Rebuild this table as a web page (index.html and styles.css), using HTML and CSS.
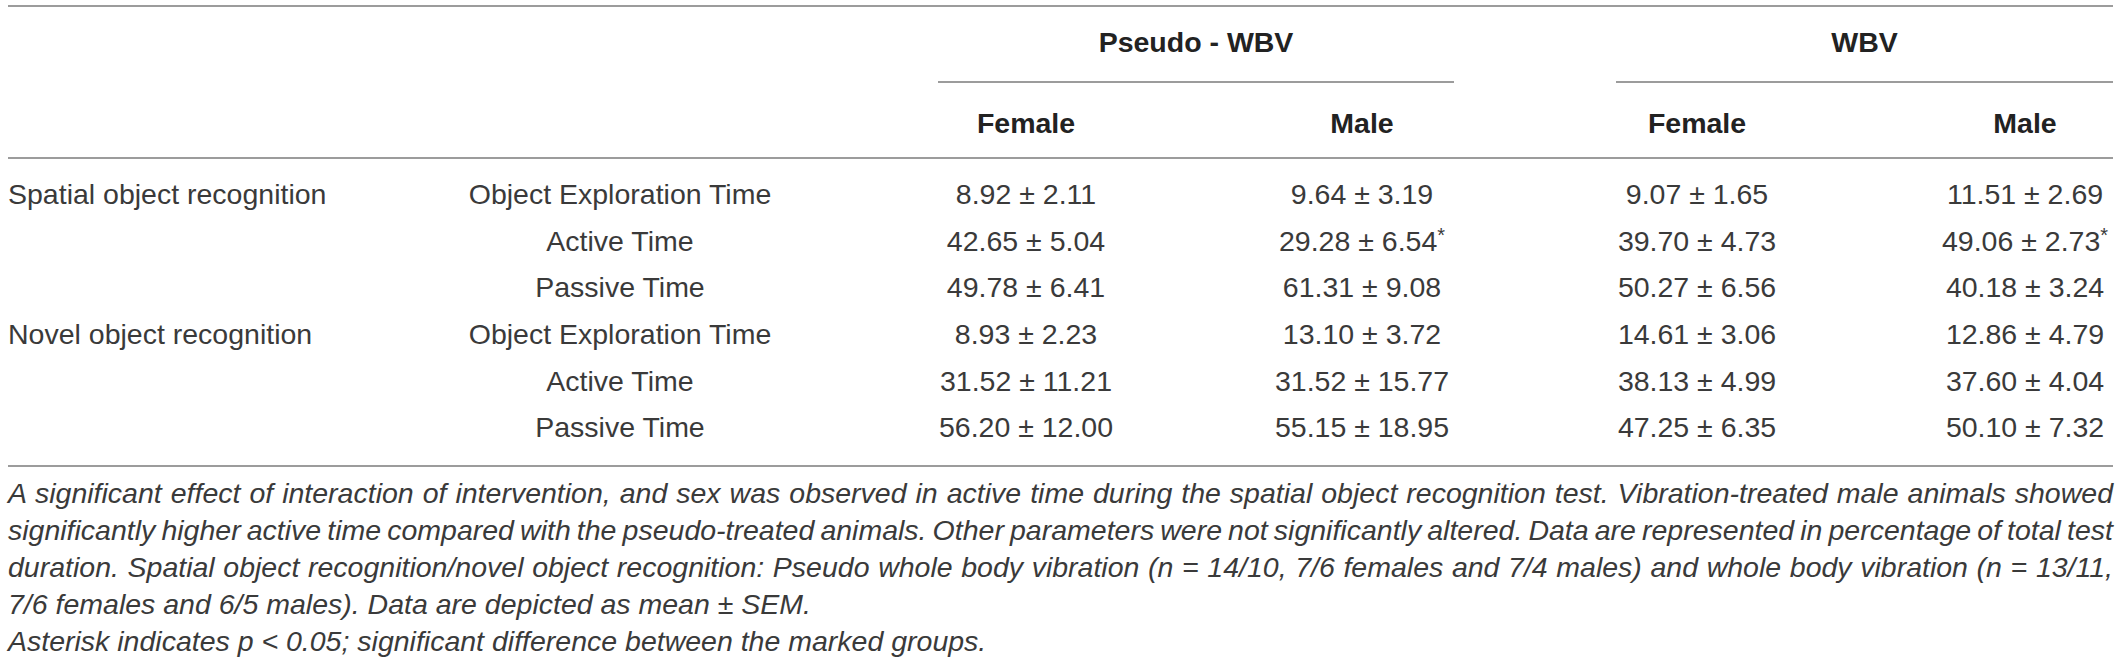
FILE: index.html
```html
<!DOCTYPE html>
<html lang="en">
<head>
<meta charset="UTF-8">
<meta name="viewport" content="width=device-width, initial-scale=1.0">
<title>Object recognition – exploration time</title>
<link rel="stylesheet" href="styles.css">
</head>
<body>

<div class="page">
  <table class="data">
    <colgroup>
      <col class="c-test">
      <col class="c-param">
      <col class="c-pf">
      <col class="c-pm">
      <col class="c-wf">
      <col class="c-wm">
    </colgroup>
    <thead>
      <tr class="head-groups">
        <th></th>
        <th></th>
        <th colspan="2" class="group pseudo"><div class="group-label">Pseudo - WBV</div></th>
        <th colspan="2" class="group wbv"><div class="group-label">WBV</div></th>
      </tr>
      <tr class="head-sex">
        <th></th>
        <th></th>
        <th>Female</th>
        <th>Male</th>
        <th>Female</th>
        <th>Male</th>
      </tr>
    </thead>
    <tbody>
      <tr>
        <td class="test">Spatial object recognition</td>
        <td>Object Exploration Time</td>
        <td>8.92 ± 2.11</td>
        <td>9.64 ± 3.19</td>
        <td>9.07 ± 1.65</td>
        <td>11.51 ± 2.69</td>
      </tr>
      <tr>
        <td class="test"></td>
        <td>Active Time</td>
        <td>42.65 ± 5.04</td>
        <td>29.28 ± 6.54<span class="sig">*</span></td>
        <td>39.70 ± 4.73</td>
        <td>49.06 ± 2.73<span class="sig">*</span></td>
      </tr>
      <tr>
        <td class="test"></td>
        <td>Passive Time</td>
        <td>49.78 ± 6.41</td>
        <td>61.31 ± 9.08</td>
        <td>50.27 ± 6.56</td>
        <td>40.18 ± 3.24</td>
      </tr>
      <tr>
        <td class="test">Novel object recognition</td>
        <td>Object Exploration Time</td>
        <td>8.93 ± 2.23</td>
        <td>13.10 ± 3.72</td>
        <td>14.61 ± 3.06</td>
        <td>12.86 ± 4.79</td>
      </tr>
      <tr>
        <td class="test"></td>
        <td>Active Time</td>
        <td>31.52 ± 11.21</td>
        <td>31.52 ± 15.77</td>
        <td>38.13 ± 4.99</td>
        <td>37.60 ± 4.04</td>
      </tr>
      <tr>
        <td class="test"></td>
        <td>Passive Time</td>
        <td>56.20 ± 12.00</td>
        <td>55.15 ± 18.95</td>
        <td>47.25 ± 6.35</td>
        <td>50.10 ± 7.32</td>
      </tr>
    </tbody>
  </table>

  <div class="caption">
    <p>
      <span class="line full">A significant effect of interaction of intervention, and sex was observed in active time during the spatial object recognition test. Vibration-treated male animals showed</span>
      <span class="line full">significantly higher active time compared with the pseudo-treated animals. Other parameters were not significantly altered. Data are represented in percentage of total test</span>
      <span class="line full">duration. Spatial object recognition/novel object recognition: Pseudo whole body vibration (n = 14/10, 7/6 females and 7/4 males) and whole body vibration (n = 13/11,</span>
      <span class="line">7/6 females and 6/5 males). Data are depicted as mean ± SEM.</span>
    </p>
    <p>Asterisk indicates p &lt; 0.05; significant difference between the marked groups.</p>
  </div>
</div>

</body>
</html>
```

FILE: styles.css
```css
/* Table figure: object recognition results */
body {
  margin: 0;
  background-color: #fff;
  font-family: "Liberation Sans", Arial, sans-serif;
  color: #3a3a3a;
}
.page {
  padding: 5px 7px 0 8px;
}

.data {
  width: 2105px;
  table-layout: fixed;
  border-collapse: separate;
  border-spacing: 0;
  border-top: 2px solid #9c9c9c;
  border-bottom: 2px solid #9c9c9c;
  font-size: 28.5px;
  line-height: 32px;
}
.c-test  { width: 447px; }
.c-param { width: 330px; }
.c-pf    { width: 482px; }
.c-pm    { width: 190px; }
.c-wf    { width: 480px; }
.c-wm    { width: 176px; }

th, td {
  padding: 0;
  text-align: center;
  white-space: nowrap;
  font-weight: normal;
}

/* header */
.head-groups th {
  vertical-align: top;
}
.group {
  font-weight: bold;
  color: #222;
  padding-left: 153px;
  padding-right: 3px;
}
.group.wbv {
  padding-left: 159px;
  padding-right: 0;
}
.group-label {
  padding: 19px 0 23px;
  border-bottom: 2px solid #9c9c9c;
}
.head-sex th {
  font-weight: bold;
  color: #222;
  padding: 24px 0 18px;
  border-bottom: 2px solid #9c9c9c;
}

/* body */
tbody td {
  padding: 7.35px 0;
}
tbody tr:first-child td {
  padding-top: 19px;
}
tbody tr:last-child td {
  padding-bottom: 21.5px;
}
td.test {
  text-align: left;
}
.sig {
  font-size: 0.7em;
  line-height: 0;
  vertical-align: 0.45em;
}

/* caption */
.caption {
  width: 2105px;
  margin-top: 8px;
  font-size: 28.5px;
  line-height: 37px;
  font-style: italic;
  color: #3a3a3a;
}
.caption p {
  margin: 0;
}
.line {
  display: block;
  text-align: left;
}
.line.full {
  word-spacing: -2px;
  text-align: justify;
  text-align-last: justify;
}
```
